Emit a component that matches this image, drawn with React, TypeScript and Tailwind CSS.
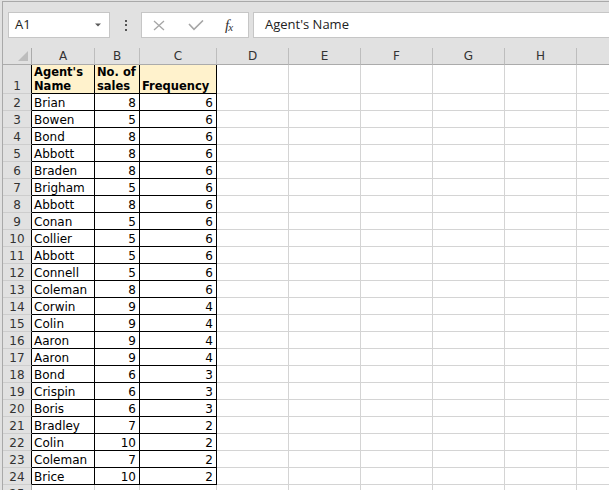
import React from "react";

const data: [string, number, number][] = [
  ["Brian", 8, 6],
  ["Bowen", 5, 6],
  ["Bond", 8, 6],
  ["Abbott", 8, 6],
  ["Braden", 8, 6],
  ["Brigham", 5, 6],
  ["Abbott", 8, 6],
  ["Conan", 5, 6],
  ["Collier", 5, 6],
  ["Abbott", 5, 6],
  ["Connell", 5, 6],
  ["Coleman", 8, 6],
  ["Corwin", 9, 4],
  ["Colin", 9, 4],
  ["Aaron", 9, 4],
  ["Aaron", 9, 4],
  ["Bond", 6, 3],
  ["Crispin", 6, 3],
  ["Boris", 6, 3],
  ["Bradley", 7, 2],
  ["Colin", 10, 2],
  ["Coleman", 7, 2],
  ["Brice", 10, 2],
];

const emptyCols = ["D", "E", "F", "G", "H"];

function EmptyCells() {
  return (
    <>
      {emptyCols.map((c) => (
        <div key={c} className="w-[72px] shrink-0 bg-white border-r border-b border-[#d4d4d4]" />
      ))}
      <div className="flex-1 bg-white border-b border-[#d4d4d4]" />
    </>
  );
}

export default function App() {
  return (
    <div
      className="w-[609px] h-[490px] overflow-hidden bg-[#e1e1e1] pt-px pl-[2px]"
      style={{ fontFamily: '"DejaVu Sans", Verdana, sans-serif' }}
    >
      <div className="h-full border-t border-l border-[#a9a9a9] flex flex-col">
        {/* formula bar */}
        <div
          className="mt-[10px] h-[26px] flex shrink-0"
          style={{ fontFamily: '"Open Sans", "Noto Sans", sans-serif' }}
        >
          <div className="ml-[5px] w-[102px] shrink-0 bg-white border border-[#c6c6c6] flex items-center justify-between pl-[6px] pr-[8px] text-[13px] text-[#222]">
            <span>A1</span>
            <svg width="6" height="4" viewBox="0 0 6 4">
              <path d="M0 0.5 L6 0.5 L3 3.5 Z" fill="#595959" />
            </svg>
          </div>
          <div className="w-[31px] shrink-0 flex flex-col items-center justify-center gap-[2.5px]">
            <div className="w-[2px] h-[2px] bg-[#555]" />
            <div className="w-[2px] h-[2px] bg-[#555]" />
            <div className="w-[2px] h-[2px] bg-[#555]" />
          </div>
          <div className="w-[108px] shrink-0 bg-white border border-[#c6c6c6] flex items-center">
            <svg className="ml-[11px]" width="12" height="11" viewBox="0 0 12 11">
              <path d="M1 1 L11 10 M11 1 L1 10" stroke="#a6a6a6" strokeWidth="1.3" fill="none" />
            </svg>
            <svg className="ml-[23px]" width="16" height="11" viewBox="0 0 16 11">
              <path d="M1 4 L6 9.3 L15 0.5" stroke="#a6a6a6" strokeWidth="1.6" fill="none" />
            </svg>
            <span
              className="ml-[21px] italic text-[#333] leading-none flex items-end"
              style={{ fontFamily: '"Liberation Serif", "Times New Roman", serif' }}
            >
              <span className="text-[15px]">f</span>
              <span className="text-[11px] -ml-[1px]">x</span>
            </span>
          </div>
          <div className="ml-[4px] flex-1 -mr-[4px] bg-white border border-[#c6c6c6] flex items-center pl-[11px] text-[13px] text-[#222]">
            Agent's Name
          </div>
        </div>

        {/* sheet */}
        <div className="mt-[10px] flex flex-col text-[12px] leading-[14px] text-black">
          {/* column header */}
          <div className="flex h-[17px] shrink-0 text-[#333]">
            <div className="w-[29px] shrink-0 border-r border-b border-[#ababab] relative">
              <svg className="absolute left-[15px] top-[3px]" width="11" height="11" viewBox="0 0 11 11">
                <path d="M10 0 L10 10 L0 10 Z" fill="#bdbdbd" />
              </svg>
            </div>
            {[
              ["A", "w-[63px]"],
              ["B", "w-[45px]"],
              ["C", "w-[77px]"],
            ].map(([l, w]) => (
              <div key={l} className={`${w} shrink-0 border-r border-r-[#bdbdbd] border-b border-b-[#ababab] flex items-center justify-center`}>
                {l}
              </div>
            ))}
            {emptyCols.map((l) => (
              <div key={l} className="w-[72px] shrink-0 border-r border-r-[#bdbdbd] border-b border-b-[#ababab] flex items-center justify-center">
                {l}
              </div>
            ))}
            <div className="flex-1 border-b border-[#ababab]" />
          </div>

          {/* row 1 */}
          <div className="flex h-[29px] shrink-0">
            <div className="w-[29px] shrink-0 border-b border-b-[#cdcdcd] border-r border-r-black flex items-end justify-center text-[#333]">
              1
            </div>
            <div className="w-[63px] shrink-0 bg-[#fff2cc] border-r border-b border-black flex items-end pl-[2px] font-bold text-[11.5px]">
              <span>
                Agent's
                <br />
                Name
              </span>
            </div>
            <div className="w-[45px] shrink-0 bg-[#fff2cc] border-r border-b border-black flex items-end pl-[2px] font-bold text-[11.5px]">
              <span>
                No. of
                <br />
                sales
              </span>
            </div>
            <div className="w-[77px] shrink-0 bg-[#fff2cc] border-r border-b border-black flex items-end pl-[2px] font-bold text-[11.5px]">
              <span>Frequency</span>
            </div>
            <EmptyCells />
          </div>

          {data.map(([name, sales, freq], i) => (
            <div key={i} className="flex h-[17px] shrink-0">
              <div className="w-[29px] shrink-0 border-b border-b-[#cdcdcd] border-r border-r-black flex items-end justify-center text-[#333]">
                {i + 2}
              </div>
              <div className="w-[63px] shrink-0 bg-white border-r border-b border-black flex items-end pl-[2px]">
                {name}
              </div>
              <div className="w-[45px] shrink-0 bg-white border-r border-b border-black flex items-end justify-end pr-[3px]">
                {sales}
              </div>
              <div className="w-[77px] shrink-0 bg-white border-r border-b border-black flex items-end justify-end pr-[3px]">
                {freq}
              </div>
              <EmptyCells />
            </div>
          ))}

          {/* row 25 */}
          <div className="flex h-[17px] shrink-0">
            <div className="w-[29px] shrink-0 border-b border-b-[#cdcdcd] border-r border-r-[#ababab] flex items-end justify-center text-[#333]">
              25
            </div>
            <div className="w-[63px] shrink-0 bg-white border-r border-b border-[#d4d4d4]" />
            <div className="w-[45px] shrink-0 bg-white border-r border-b border-[#d4d4d4]" />
            <div className="w-[77px] shrink-0 bg-white border-r border-b border-[#d4d4d4]" />
            <EmptyCells />
          </div>
        </div>
      </div>
    </div>
  );
}
